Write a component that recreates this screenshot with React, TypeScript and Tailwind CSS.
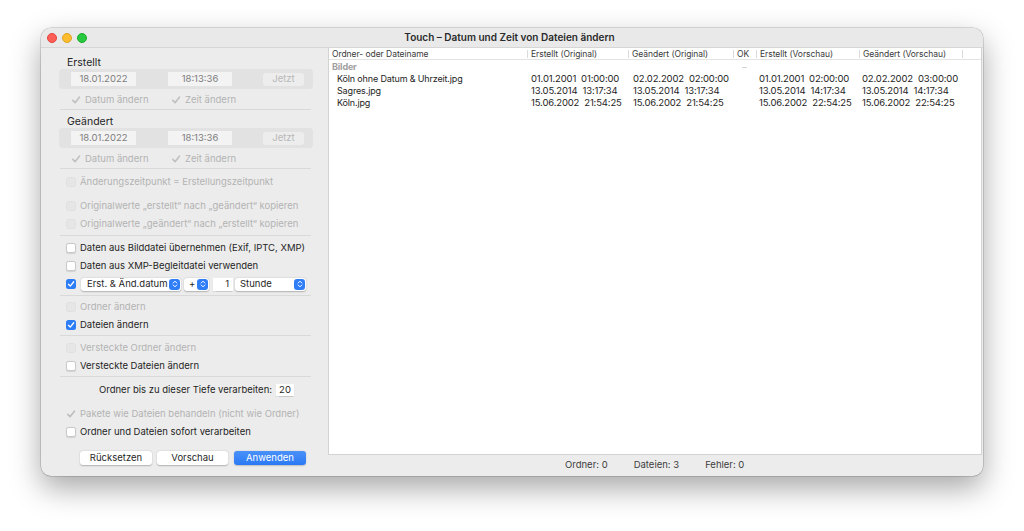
import React from 'react';

type CbState = 'on' | 'off' | 'dis' | 'dison';

function Tick({ color, size = 8 }: { color: string; size?: number }) {
  return (
    <svg width={size} height={size} viewBox="0 0 10 10" fill="none">
      <path d="M1.8 5.4 L4.1 7.7 L8.4 2.2" stroke={color} strokeWidth="1.6" strokeLinecap="round" strokeLinejoin="round" />
    </svg>
  );
}

function Checkbox({ state }: { state: CbState }) {
  if (state === 'on')
    return (
      <div className="w-[10px] h-[10px] rounded-[2.5px] bg-[#2d7df6] flex items-center justify-center shrink-0">
        <Tick color="#ffffff" />
      </div>
    );
  if (state === 'dison')
    return (
      <div className="w-[10px] h-[10px] flex items-center justify-center shrink-0">
        <Tick color="#bdbdbd" size={10} />
      </div>
    );
  if (state === 'dis')
    return <div className="w-[10px] h-[10px] rounded-[2.5px] bg-[#e6e6e6] border border-[#e0e0e0] shrink-0" />;
  return <div className="w-[10px] h-[10px] rounded-[2.5px] bg-white border border-[#c9c9c9] shadow-[0_0.5px_1px_rgba(0,0,0,0.12)] shrink-0" />;
}

function CbRow({ label, state }: { label: string; state: CbState }) {
  const disabled = state === 'dis' || state === 'dison';
  return (
    <div className="h-[18px] flex items-center gap-[4px] pl-[25px]">
      <Checkbox state={state} />
      <span className={disabled ? 'text-[#b3b3b3]' : 'text-[#1f1f1f]'}>{label}</span>
    </div>
  );
}

function Sep({ mt = 'mt-[3px]' }: { mt?: string }) {
  return <div className={`${mt} ml-[19px] mr-[17px] h-px bg-[#d9d9d9]`} />;
}

function Stepper() {
  return (
    <div className="w-[11px] h-[11px] rounded-[3px] bg-[#2f7ef6] flex items-center justify-center">
      <svg width="6" height="8" viewBox="0 0 6 8" fill="none">
        <path d="M1.2 3 L3 1.2 L4.8 3 M1.2 5 L3 6.8 L4.8 5" stroke="#fff" strokeWidth="1" strokeLinecap="round" strokeLinejoin="round" />
      </svg>
    </div>
  );
}

function DateGroup({ label, first }: { label: string; first?: boolean }) {
  return (
    <>
      <div className={`${first ? 'mt-[9px]' : 'mt-[6px]'} h-[12px] flex items-center pl-[26px] text-[10.5px] text-[#262626]`}>{label}</div>
      <div className="ml-[18px] mr-[15px] h-[20px] rounded-[4px] bg-[#e2e2e2] flex items-center pl-[12px]">
        <div className="w-[65px] h-[14px] bg-[#f3f3f3] flex items-center justify-center text-[#7d7d7d]">18.01.2022</div>
        <div className="ml-[32px] w-[64px] h-[14px] bg-[#f3f3f3] flex items-center justify-center text-[#7d7d7d]">18:13:36</div>
        <div className="ml-[31px] w-[41px] h-[13px] rounded-[3px] bg-[#ededed] flex items-center justify-center text-[#b8b8b8]">Jetzt</div>
      </div>
      <div className="h-[19px] pt-[3px] flex items-center pl-[30px] text-[#b3b3b3]">
        <div className="w-[100px] flex items-center">
          <Tick color="#c0c0c0" size={10} />
          <span className="ml-[4px]">Datum ändern</span>
        </div>
        <div className="flex items-center">
          <Tick color="#c0c0c0" size={10} />
          <span className="ml-[4px]">Zeit ändern</span>
        </div>
      </div>
    </>
  );
}

const cols = 'grid grid-cols-[198px_101px_105px_23px_103px_103px_1fr]';

const files = [
  ['Köln ohne Datum & Uhrzeit.jpg', '01.01.2001', '01:00:00', '02.02.2002', '02:00:00', '01.01.2001', '02:00:00', '02.02.2002', '03:00:00'],
  ['Sagres.jpg', '13.05.2014', '13:17:34', '13.05.2014', '13:17:34', '13.05.2014', '14:17:34', '13.05.2014', '14:17:34'],
  ['Köln.jpg', '15.06.2002', '21:54:25', '15.06.2002', '21:54:25', '15.06.2002', '22:54:25', '15.06.2002', '22:54:25'],
];

function Stamp({ d, t, pl }: { d: string; t: string; pl: string }) {
  return (
    <div className={`${pl} flex gap-[5px] whitespace-nowrap text-[9.5px]`}>
      <span>{d}</span>
      <span>{t}</span>
    </div>
  );
}

function HeadCell({ label, first, center }: { label: string; first?: boolean; center?: boolean }) {
  return (
    <div className="flex items-center h-full">
      {!first && <div className="w-px h-[8px] bg-[#dcdcdc]" />}
      <span className={`${center ? 'flex-1 text-center' : 'pl-[3px]'} whitespace-nowrap`}>{label}</span>
    </div>
  );
}

export default function App() {
  return (
    <div className="w-[1024px] h-[531px] bg-white pt-[28px] pl-[41px]" style={{ fontFamily: 'Inter, "Noto Sans", sans-serif' }}>
      <div className="w-[942px] h-[448px] rounded-[10px] bg-[#ececec] overflow-hidden flex flex-col shadow-[0_12px_30px_rgba(0,0,0,0.35),0_0_0_0.5px_rgba(0,0,0,0.25)]">
        {/* title bar */}
        <div className="h-[20px] shrink-0 flex items-center relative bg-[#e9e9e9] border-b border-[#d6d6d6]">
          <div className="flex items-center gap-[5px] pl-[6px]">
            <div className="w-[10px] h-[10px] rounded-full bg-[#fe5f57] border border-[#e0443e]" />
            <div className="w-[10px] h-[10px] rounded-full bg-[#febc2e] border border-[#dea123]" />
            <div className="w-[10px] h-[10px] rounded-full bg-[#28c840] border border-[#1aab29]" />
          </div>
          <div className="flex-1 text-center pr-[51px] text-[10px] font-semibold text-[#2a2a2a]">Touch – Datum und Zeit von Dateien ändern</div>
        </div>

        <div className="flex flex-1 min-h-0">
          {/* left panel */}
          <div className="w-[287px] shrink-0 flex flex-col text-[9.5px]">
            <DateGroup label="Erstellt" first />
            <Sep mt="mt-[1px]" />
            <DateGroup label="Geändert" />
            <Sep mt="mt-[1px]" />
            <div className="mt-[4px]" />
            <CbRow label="Änderungszeitpunkt = Erstellungszeitpunkt" state="dis" />
            <div className="mt-[6px]" />
            <CbRow label="Originalwerte „erstellt“ nach „geändert“ kopieren" state="dis" />
            <CbRow label="Originalwerte „geändert“ nach „erstellt“ kopieren" state="dis" />
            <Sep mt="mt-[2px]" />
            <div className="mt-[3px]" />
            <CbRow label="Daten aus Bilddatei übernehmen (Exif, IPTC, XMP)" state="off" />
            <CbRow label="Daten aus XMP-Begleitdatei verwenden" state="off" />
            <div className="h-[18px] flex items-center pl-[25px] text-[#1f1f1f]">
              <Checkbox state="on" />
              <div className="ml-[5px] w-[100px] h-[13px] rounded-[3px] bg-white shadow-[0_0.5px_1.5px_rgba(0,0,0,0.25)] flex items-center justify-between pl-[6px] pr-[1px]">
                <span className="whitespace-nowrap">Erst. &amp; Änd.datum</span>
                <Stepper />
              </div>
              <div className="ml-[3px] w-[25px] h-[13px] rounded-[3px] bg-white shadow-[0_0.5px_1.5px_rgba(0,0,0,0.25)] flex items-center justify-between pl-[5px] pr-[1px]">
                <span>+</span>
                <Stepper />
              </div>
              <div className="ml-[4px] w-[20px] h-[13px] bg-white flex items-center justify-end pr-[4px] shadow-[0_0.5px_1px_rgba(0,0,0,0.15)]">1</div>
              <div className="ml-[2px] w-[71px] h-[13px] rounded-[3px] bg-white shadow-[0_0.5px_1.5px_rgba(0,0,0,0.25)] flex items-center justify-between pl-[5px] pr-[1px]">
                <span>Stunde</span>
                <Stepper />
              </div>
            </div>
            <Sep mt="mt-[2px]" />
            <div className="mt-[2px]" />
            <CbRow label="Ordner ändern" state="dis" />
            <CbRow label="Dateien ändern" state="on" />
            <Sep mt="mt-[1px]" />
            <div className="mt-[3px]" />
            <CbRow label="Versteckte Ordner ändern" state="dis" />
            <CbRow label="Versteckte Dateien ändern" state="off" />
            <Sep mt="mt-[1px]" />
            <div className="mt-[4px] h-[18px] flex items-center justify-end pr-[34px] text-[#1f1f1f]">
              <span>Ordner bis zu dieser Tiefe verarbeiten:</span>
              <div className="ml-[4px] w-[18px] h-[12px] bg-white flex items-center justify-center shadow-[0_0.5px_1px_rgba(0,0,0,0.15)]">20</div>
            </div>
            <div className="mt-[6px]" />
            <CbRow label="Pakete wie Dateien behandeln (nicht wie Ordner)" state="dison" />
            <CbRow label="Ordner und Dateien sofort verarbeiten" state="off" />
            <div className="mt-[10px] pl-[39px] flex gap-[5px]">
              <div className="w-[72px] h-[14px] rounded-[3px] bg-white shadow-[0_0.5px_1.5px_rgba(0,0,0,0.25)] flex items-center justify-center text-[#1f1f1f]">Rücksetzen</div>
              <div className="w-[71px] h-[14px] rounded-[3px] bg-white shadow-[0_0.5px_1.5px_rgba(0,0,0,0.25)] flex items-center justify-center text-[#1f1f1f]">Vorschau</div>
              <div className="ml-[1px] w-[72px] h-[14px] rounded-[3px] bg-gradient-to-b from-[#4a91f8] to-[#2a79f5] shadow-[0_0.5px_1.5px_rgba(0,0,0,0.2)] flex items-center justify-center text-white">Anwenden</div>
            </div>
          </div>

          {/* right panel */}
          <div className="flex-1 flex flex-col pr-[1px]">
            <div className="flex-1 bg-white border border-[#d3d3d3] border-t-0 text-[9px] tracking-[-0.15px] text-[#1e1e1e]">
              <div className={`${cols} h-[12px] border-b border-[#e3e3e3] text-[8.5px] tracking-[-0.05px] text-[#3a3a3a]`}>
                <HeadCell label="Ordner- oder Dateiname" first />
                <HeadCell label="Erstellt (Original)" />
                <HeadCell label="Geändert (Original)" />
                <HeadCell label="OK" />
                <HeadCell label="Erstellt (Vorschau)" />
                <HeadCell label="Geändert (Vorschau)" />
                <HeadCell label="" />
              </div>
              <div className={`${cols} h-[12px] items-center`}>
                <div className="pl-[3px] font-bold text-[#a0a0a0]">Bilder</div>
                <div />
                <div />
                <div className="text-center text-[#c4c4c4]">–</div>
              </div>
              {files.map((f) => (
                <div key={f[0]} className={`${cols} h-[12px] items-center`}>
                  <div className="pl-[8px] whitespace-nowrap">{f[0]}</div>
                  <Stamp d={f[1]} t={f[2]} pl="pl-[4px]" />
                  <Stamp d={f[3]} t={f[4]} pl="pl-[5px]" />
                  <div />
                  <Stamp d={f[5]} t={f[6]} pl="pl-[3px]" />
                  <Stamp d={f[7]} t={f[8]} pl="pl-[3px]" />
                  <div />
                </div>
              ))}
            </div>
            <div className="h-[21px] shrink-0 flex items-center text-[9.5px] text-[#3d3d3d] pl-[237px] gap-[26px]">
              <span>Ordner: 0</span>
              <span>Dateien: 3</span>
              <span>Fehler: 0</span>
            </div>
          </div>
        </div>
      </div>
    </div>
  );
}
